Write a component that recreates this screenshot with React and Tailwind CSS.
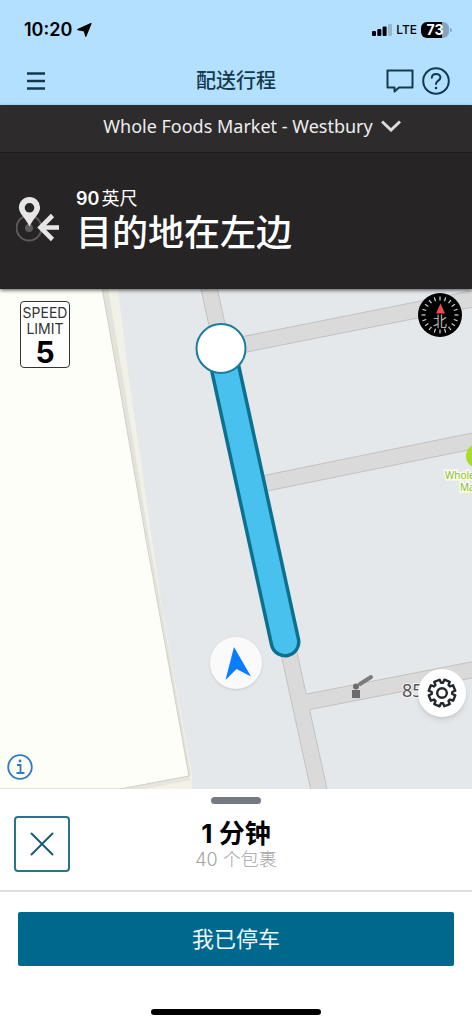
import React from "react";

const StatusBar = () => (
  <div className="flex items-center justify-between pt-4 pr-5 pl-6 text-black">
    <div className="flex items-center gap-1">
      <span className="text-lg leading-7 font-semibold">10:20</span>
      <svg className="size-4" viewBox="0 0 16 16" fill="currentColor" stroke="currentColor" strokeWidth="1.200" strokeLinejoin="round" aria-hidden="true">
        <path d="M15 1.500L9.800 14.300 8.300 8.800 1.800 7.600z" />
      </svg>
    </div>
    <div className="flex items-center gap-1">
      <svg className="h-3 w-5" viewBox="0 0 20 12" aria-hidden="true">
        <rect x="0" y="7" width="4" height="5" rx="1" />
        <rect x="5.300" y="5" width="4" height="7" rx="1" />
        <rect x="10.600" y="2.500" width="4" height="9.500" rx="1" />
        <rect x="16" y="0" width="4" height="12" rx="1" fill="#93b7cd" />
      </svg>
      <span className="text-xs leading-4 font-medium">LTE</span>
      <div className="flex items-center">
        <div className="flex h-4 w-7 items-center justify-center rounded-md bg-linear-to-r from-black from-75% to-[#85a6ba] to-75% text-sm leading-4 font-bold text-white">
          73
        </div>
        <div className="ml-px h-1 w-0.5 rounded-r bg-[#85a6ba]" />
      </div>
    </div>
  </div>
);

const Header = () => (
  <header className="border-b border-[#23404f] bg-[#b3e0fe]">
    <StatusBar />
    <div className="grid grid-cols-[1fr_auto_1fr] items-center px-5 pt-[21px] pb-2 text-[#14384d]">
      <button type="button" aria-label="菜单" className="flex size-8 items-center justify-center">
        <svg className="size-5" viewBox="0 0 20 20" stroke="currentColor" strokeWidth="2.400" aria-hidden="true">
          <path d="M1 2.500h18M1 10h18M1 17.500h18" />
        </svg>
      </button>
      <h1 className="text-xl leading-8 font-medium">配送行程</h1>
      <div className="flex items-center justify-end gap-2 pr-0.5">
        <button type="button" aria-label="消息">
          <svg className="h-6 w-7" viewBox="0 0 28 24" fill="none" stroke="currentColor" strokeWidth="2" strokeLinejoin="round" aria-hidden="true">
            <path d="M1.500 1.500h25v17H13l-4.500 4v-4h-7z" />
          </svg>
        </button>
        <button type="button" aria-label="帮助">
          <svg className="size-7" viewBox="0 0 28 28" fill="none" stroke="currentColor" strokeWidth="2" strokeLinecap="round" aria-hidden="true">
            <circle cx="14" cy="14" r="12.800" />
            <path d="M9.800 10.800c.2-5 8.600-5 8.600-.2 0 3.200-4.400 3-4.400 6.400" />
            <circle cx="14" cy="21" r="1.300" fill="currentColor" stroke="none" />
          </svg>
        </button>
      </div>
    </div>
  </header>
);

const Directions = () => (
  <section className="relative z-10 bg-[#262425] text-white shadow-[0_1px_4px_rgba(0,0,0,0.7)]">
    <button type="button" className="flex w-full items-center justify-center gap-2 border-b border-[#1d1b1c] bg-[#2d2b2c] pt-1 pb-2.5 pl-8">
      <span className="font-['Noto_Sans',sans-serif] text-lg leading-8 text-[#eeeeee]">
        Whole Foods Market - Westbury
      </span>
      <svg className="h-3 w-5" viewBox="0 0 20 12" fill="none" stroke="#dcdcdc" strokeWidth="3" aria-hidden="true">
        <path d="M1 1.500l9 8.500 9-8.500" />
      </svg>
    </button>
    <div className="flex items-center gap-4 px-4 py-[34px]">
      <svg className="h-12 w-11 shrink-0" viewBox="0 0 44 48" aria-hidden="true">
        <circle cx="13" cy="31" r="12.500" fill="none" stroke="#5c5a5b" strokeWidth="2" />
        <circle cx="13" cy="31" r="4" fill="#5c5a5b" />
        <path
          d="M13.500 0a10.600 10.600 0 0 1 10.600 10.600c0 6-6.500 10.400-10.600 19-4.100-8.600-10.600-13-10.600-19A10.600 10.600 0 0 1 13.500 0zm0 6a4.800 4.800 0 1 0 0 9.600 4.800 4.800 0 0 0 0-9.600z"
          fill="#e6e6e6"
          fillRule="evenodd"
        />
        <path d="M43 30.500H25M36.500 18.500l-12 12 12 12" fill="none" stroke="#e6e6e6" strokeWidth="4.600" />
      </svg>
      <div>
        <p className="flex gap-0.5 text-lg leading-6">
          <span className="font-semibold">90</span>
          <span>英尺</span>
        </p>
        <p className="text-4xl leading-11 font-medium">目的地在左边</p>
      </div>
    </div>
  </section>
);

const roads = [
  "M207 -10 321 510",
  "M221 60 492 6",
  "M262 195 492 148",
  "M302 414 492 377",
];

const MapCanvas = () => (
  <svg
    className="absolute inset-0 size-full"
    viewBox="0 0 472 500"
    preserveAspectRatio="xMidYMid slice"
    role="img"
    aria-label="地图"
  >
    <rect width="472" height="500" fill="#e4e8ea" />
    <path d="M100 0h18l10 83 24 167 10 70 30 165v15h-92z" fill="#f2f1e8" />
    <path d="M102 0h6l14 83 27 167 11 62 31 174-2 1z" fill="#e3e3dc" />
    <path d="M189 487l2 4-46 9h-25z" fill="#e6e5de" />
    <path d="M-1 -1h103l15 84 29 167 43 237-69 13H-1z" fill="#fdfef8" stroke="#cfcfc8" />

    <g fill="none" stroke="#c2c2c2" strokeWidth="17">
      {roads.map((d) => (
        <path key={d} d={d} />
      ))}
    </g>
    <g fill="none" stroke="#dbdadb" strokeWidth="15">
      {roads.map((d) => (
        <path key={d} d={d} />
      ))}
    </g>

    {/* active route */}
    <g fill="none" strokeLinecap="round">
      <path d="M221 60 285 353" stroke="#0c718f" strokeWidth="31" />
      <path d="M221 60 285 353" stroke="#48c1ee" strokeWidth="24" />
    </g>
    <circle cx="221" cy="59.500" r="24.500" fill="#fff" stroke="#1c7c9c" strokeWidth="2" />

    {/* gate */}
    <g fill="#6c6c6c">
      <rect x="352" y="401" width="8" height="8" />
      <circle cx="356" cy="397.500" r="3" />
      <path d="M360 395l11-7" stroke="#7b7b7b" strokeWidth="4" strokeLinecap="round" />
    </g>
    <text x="402" y="408" className="font-['Noto_Sans',sans-serif] text-lg" fill="#555" stroke="#f4f4f4" strokeWidth="2" paintOrder="stroke">
      85
    </text>

    {/* store label */}
    <circle cx="478" cy="167" r="12" fill="#a6dc2f" />
    <g className="font-['Noto_Sans',sans-serif] text-[10px]" fill="#8dbb2c" stroke="#fbfff0" strokeWidth="3" paintOrder="stroke">
      <text x="445" y="190">Whole Foods</text>
      <text x="460" y="202">Market</text>
    </g>
  </svg>
);

const ticks = Array.from({ length: 20 }, (_, i) => i * 18);

const Compass = () => (
  <button type="button" aria-label="指南针" className="absolute top-1 right-2.5">
    <svg className="size-11" viewBox="0 0 44 44" aria-hidden="true">
      <circle cx="22" cy="22" r="22" fill="#000" />
      <g stroke="#d8d8d8" strokeWidth="1.200">
        {ticks.map((angle) => (
          <path key={angle} d="M22 3.500v4" transform={`rotate(${angle} 22 22)`} />
        ))}
      </g>
      <path d="M22.500 10.500l4.500 10h-9z" fill="#ee4b50" />
      <text x="22" y="33" textAnchor="middle" className="font-['Noto_Sans_CJK_SC',sans-serif] text-sm" fill="#b8b8b8">
        北
      </text>
    </svg>
  </button>
);

const SpeedLimit = () => (
  <div className="absolute top-3 left-5 flex w-[50px] flex-col items-center rounded-sm border border-[#333] bg-white pt-[3px] text-[#333]">
    <span className="text-sm leading-4">SPEED</span>
    <span className="text-sm leading-4">LIMIT</span>
    <span className="text-3xl leading-none font-bold text-black">5</span>
  </div>
);

const MapView = () => (
  <main className="relative min-h-96 flex-1 overflow-hidden">
    <MapCanvas />
    <SpeedLimit />
    <Compass />
    <div className="absolute bottom-25 left-1/2 flex size-[52px] -translate-x-1/2 items-center justify-center rounded-full bg-[#fafafb] shadow">
      <svg className="size-9" viewBox="0 0 36 36" fill="#0a7cff" aria-hidden="true">
        <path d="M16 2l17 29.500-14.500-7.500L7.500 35z" />
      </svg>
    </div>
    <button
      type="button"
      aria-label="设置"
      className="absolute right-1.5 bottom-18 flex size-12 items-center justify-center rounded-full bg-white shadow-md"
    >
      <svg className="size-8" viewBox="0 0 32 32" fill="none" stroke="#20262c" strokeWidth="2.400" strokeLinejoin="round" aria-hidden="true">
        <path
          transform="rotate(22.500 16 16)"
          d="M13.100 2.800H18.900L19 6.150 20.850 6.900 23.250 4.650 27.350 8.750 25.100 11.150 25.850 13 29.200 13.100V18.900L25.850 19 25.100 20.850 27.350 23.250 23.250 27.350 20.850 25.100 19 25.850 18.900 29.200H13.100L13 25.850 11.150 25.100 8.750 27.350 4.650 23.250 6.900 20.850 6.150 19 2.800 18.900V13.100L6.150 13 6.900 11.150 4.650 8.750 8.750 4.650 11.150 6.900 13 6.150Z"
        />
        <circle cx="16" cy="16" r="4.800" />
      </svg>
    </button>
    <button type="button" aria-label="信息" className="absolute bottom-2 left-1.5">
      <svg className="size-7" viewBox="0 0 28 28" fill="none" stroke="#2e79c8" strokeWidth="1.800" aria-hidden="true">
        <circle cx="14" cy="14" r="11.800" />
        <path d="M11 12h3.500v8M10.500 20h8" />
        <circle cx="14" cy="8" r="1.400" fill="#2e79c8" stroke="none" />
      </svg>
    </button>
  </main>
);

const TripSheet = () => (
  <section className="border-b-2 border-[#e0e0e0] bg-white px-3.5 pt-2 pb-[18px]">
    <div className="mx-auto h-[7px] w-[50px] rounded-full bg-[#757a82]" />
    <div className="grid grid-cols-[1fr_auto_1fr] items-center pt-3">
      <button
        type="button"
        aria-label="关闭"
        className="flex size-14 items-center justify-center rounded-sm border-2 border-[#2a7389] text-[#1b5c72]"
      >
        <svg className="size-6" viewBox="0 0 24 24" stroke="currentColor" strokeWidth="2" strokeLinecap="round" aria-hidden="true">
          <path d="M1.500 1.500l21 21M22.500 1.500l-21 21" />
        </svg>
      </button>
      <div className="pt-1 text-center">
        <p className="text-[26px] leading-7 font-bold text-black">1 分钟</p>
        <p className="text-lg leading-6 font-light text-[#a3a3a3]">40 个包裹</p>
      </div>
    </div>
  </section>
);

const App = () => (
  <div className="flex min-h-screen flex-col bg-white font-['Inter','Noto_Sans_CJK_SC',sans-serif]">
    <Header />
    <Directions />
    <MapView />
    <TripSheet />
    <footer className="flex flex-col items-center bg-white pt-5 pb-2">
      <div className="w-full px-[18px]">
        <button type="button" className="h-[54px] w-full rounded-xs bg-[#00688d] text-[22px] leading-8 text-[#e9f6fb]">
          我已停车
        </button>
      </div>
      <div className="mt-[43px] h-1.5 w-[170px] rounded-full bg-black" />
    </footer>
  </div>
);

export default App;
